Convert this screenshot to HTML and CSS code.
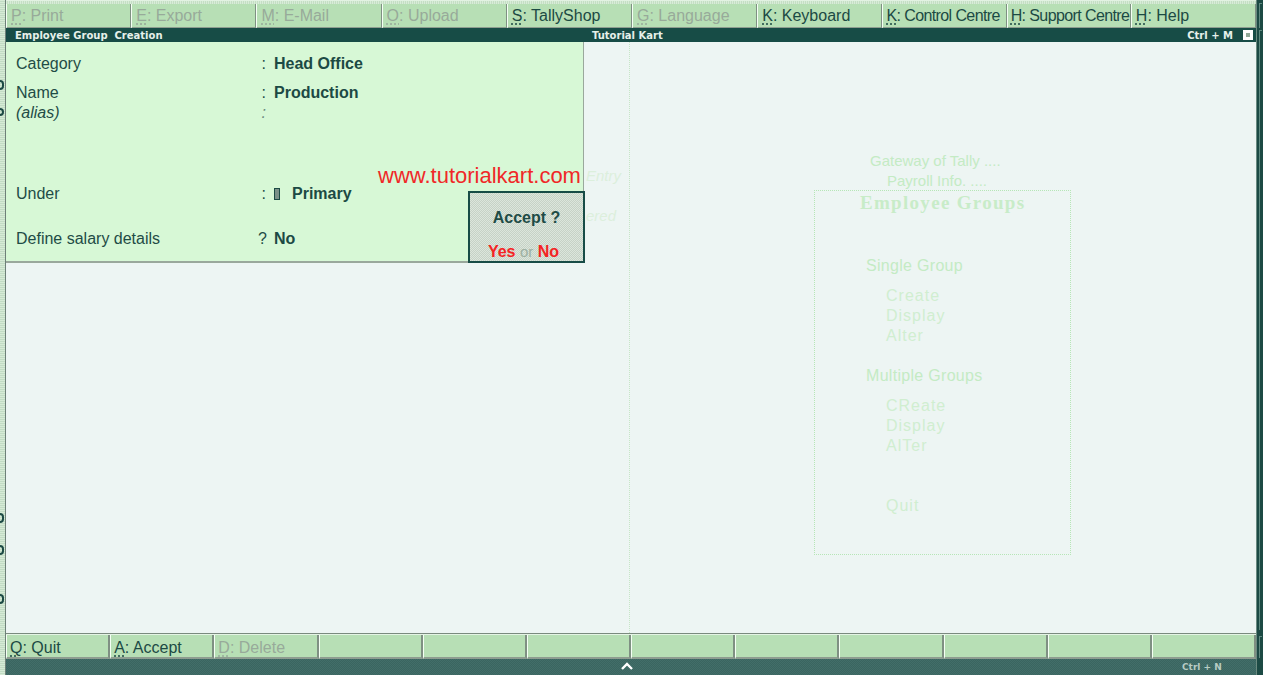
FILE: index.html
```html
<!DOCTYPE html>
<html>
<head>
<meta charset="utf-8">
<link rel="stylesheet" href="styles.css">
</head>
<body>
<div class="app">
  <div class="leftedge"><span class="frag f1"></span><span class="frag f2"></span><span class="frag f3"></span><span class="frag f4"></span><span class="frag f5"></span></div>
  <div class="center">
    <div class="topbar">
      <div class="btn off"><u>P</u>: Print</div>
      <div class="btn off"><u>E</u>: Export</div>
      <div class="btn off"><u>M</u>: E-Mail</div>
      <div class="btn off"><u>O</u>: Upload</div>
      <div class="btn"><u>S</u>: TallyShop</div>
      <div class="btn off"><u>G</u>: Language</div>
      <div class="btn"><u>K</u>: Keyboard</div>
      <div class="btn narrow"><u>K</u>: Control Centre</div>
      <div class="btn narrow"><u>H</u>: Support Centre</div>
      <div class="btn"><u>H</u>: Help</div>
    </div>
    <div class="titlebar">
      <span class="t-left">Employee Group&nbsp; Creation</span>
      <span class="t-mid">Tutorial Kart</span>
      <span class="t-right">Ctrl + M <span class="sq"></span></span>
    </div>
    <div class="main">
      <div class="bgmenu">
        <div class="bm-head1">Gateway of Tally ....</div>
        <div class="bm-head2">Payroll Info. ....</div>
        <div class="bm-box">
          <div class="bm-title">Employee Groups</div>
          <div class="bm-sec">Single Group</div>
          <div class="bm-item">Create</div>
          <div class="bm-item">Display</div>
          <div class="bm-item">Alter</div>
          <div class="bm-sec second">Multiple Groups</div>
          <div class="bm-item">CReate</div>
          <div class="bm-item">Display</div>
          <div class="bm-item">AlTer</div>
          <div class="bm-item quit">Quit</div>
        </div>
      </div>
      <div class="vline"></div>
      <div class="ghost g1">Entry</div>
      <div class="ghost g2">ered</div>
      <div class="form">
        <div class="row r-cat"><span class="lbl">Category</span><span class="sep">:</span><span class="val">Head Office</span></div>
        <div class="row r-name"><span class="lbl">Name</span><span class="sep">:</span><span class="val">Production</span></div>
        <div class="row r-alias"><span class="lbl it">(alias)</span><span class="sep it">:</span><span class="val"></span></div>
        <div class="row r-under"><span class="lbl">Under</span><span class="sep">:</span><span class="val"><span class="blk"></span>Primary</span></div>
        <div class="row r-def"><span class="lbl">Define salary details</span><span class="sep">?</span><span class="val">No</span></div>
      </div>
      <div class="watermark">www.tutorialkart.com</div>
      <div class="accept">
        <div class="acc-q">Accept ?</div>
        <div class="acc-yn"><span class="red">Yes</span> <span class="or">or</span> <span class="red">No</span></div>
      </div>
    </div>
    <div class="bottombar">
      <div class="bbtn"><u>Q</u>: Quit</div>
      <div class="bbtn"><u>A</u>: Accept</div>
      <div class="bbtn off"><u>D</u>: Delete</div>
      <div class="bbtn"></div>
      <div class="bbtn"></div>
      <div class="bbtn"></div>
      <div class="bbtn"></div>
      <div class="bbtn"></div>
      <div class="bbtn"></div>
      <div class="bbtn"></div>
      <div class="bbtn"></div>
      <div class="bbtn"></div>
    </div>
    <div class="strip">
      <span class="chev"><svg width="12" height="8" viewBox="0 0 12 8"><path d="M1 7 L6 2 L11 7" fill="none" stroke="#ffffff" stroke-width="2.4"/></svg></span>
      <span class="ctrln">Ctrl + N</span>
    </div>
  </div>
  <div class="rightedge"><span class="seg s1"></span><span class="seg s2"></span><span class="seg s3"></span></div>
</div>
</body>
</html>
```

FILE: styles.css
```css
* { box-sizing: border-box; }
html, body { margin: 0; padding: 0; }
body {
  width: 1263px;
  height: 675px;
  overflow: hidden;
  font-family: "Liberation Sans", Arial, sans-serif;
  color: #1c4a44;
  background: #edf5f3;
}
.app {
  display: flex;
  width: 1263px;
  height: 675px;
}
.leftedge {
  width: 6px;
  position: relative;
  background: repeating-linear-gradient(0deg, #d6ead6 0 1px, #c2dcc4 1px 2px);
  border-right: 1px solid #6e8078;
}
.frag {
  position: absolute;
  left: 0;
  width: 4px;
  height: 10px;
  border: 2px solid #1c4a44;
  border-left: none;
  border-radius: 0 4px 4px 0;
}
.f1 { top: 80px; }
.f2 { top: 108px; height: 8px; }
.f3 { top: 513px; }
.f4 { top: 545px; }
.f5 { top: 594px; }
.center {
  width: 1250px;
  display: flex;
  flex-direction: column;
}
.rightedge {
  width: 7px;
  position: relative;
  background: #1c4a44;
  border-left: 1px solid #6a8a80;
}
.seg {
  position: absolute;
  left: 2px;
  width: 3px;
  border-left: 1px solid #5f8a80;
  border-top: 1px solid #5f8a80;
}
.s1 { top: 3px; height: 25px; }
.s2 { top: 30px; height: 600px; }
.s3 { top: 636px; height: 22px; }

/* top button bar */
.topbar {
  height: 28px;
  display: flex;
  padding-top: 3px;
  background: repeating-linear-gradient(90deg, #d8ecd8 0 1px, #c4dec4 1px 2px);
  border-top: 1px solid #e2f2e2;
}
.btn {
  flex: 1;
  height: 25px;
  background: #b7dfb5;
  border-left: 1px solid #f4fff4;
  border-right: 1px solid #7f9083;
  border-bottom: 2px solid #8e9d90;
  font-size: 16px;
  line-height: 24px;
  padding-left: 4px;
  white-space: nowrap;
  overflow: hidden;
  color: #1c4a44;
}
.btn.narrow { letter-spacing: -0.6px; padding-left: 3px; }
.btn.off, .bbtn.off { color: #98aa9a; }
u {
  text-decoration: underline dotted;
  text-underline-offset: 3px;
}

/* title bar */
.titlebar {
  height: 14px;
  background: #174c46;
  position: relative;
  display: flex;
  align-items: center;
  font-family: "DejaVu Sans", Verdana, sans-serif;
  font-weight: bold;
  font-size: 10px;
  color: #e6f0ea;
  padding-left: 9px;
}
.t-left { flex: 1; }
.t-mid {
  position: absolute;
  left: 586px;
  top: 0;
  bottom: 0;
  display: flex;
  align-items: center;
}
.t-right {
  display: flex;
  align-items: center;
  gap: 10px;
  padding-right: 3px;
}
.sq {
  display: inline-block;
  width: 10px;
  height: 10px;
  border: 3px solid #ffffff;
  background: #90a898;
}

/* main area */
.main {
  flex: 1;
  position: relative;
  background: #edf5f3;
  border-bottom: 1px solid #7a8a7e;
}
.form {
  width: 578px;
  height: 221px;
  background: #d7f8d6;
  border-right: 1px solid #9aa89c;
  border-bottom: 2px solid #9aa89c;
  padding-top: 12px;
  padding-left: 10px;
  position: relative;
}
.row {
  display: flex;
  font-size: 16px;
  line-height: 20px;
}
.lbl { width: 242px; color: #1f4c46; }
.sep { width: 8px; text-align: right; color: #1f4c46; }
.val { padding-left: 8px; font-weight: bold; color: #1c4a44; display: flex; align-items: center; }
.it { font-style: italic; }
.sep.it { color: #6c8a80; }
.r-name { margin-top: 9px; }
.r-under { margin-top: 61px; }
.r-def { margin-top: 25px; }
.blk {
  display: inline-block;
  width: 6px;
  height: 12px;
  background: #7a9088;
  border: 1.5px solid #1c4a44;
  margin-right: 12px;
}

.watermark {
  position: absolute;
  left: 372px;
  top: 121px;
  font-size: 22px;
  color: #f02828;
  white-space: nowrap;
}
.accept {
  position: absolute;
  left: 462px;
  top: 149px;
  width: 117px;
  height: 72px;
  border: 2px solid #174c46;
  background: repeating-conic-gradient(#dce6dc 0 25%, #c6d2c6 0 50%) 0 0 / 2px 2px;
  text-align: center;
  font-weight: bold;
  font-size: 16px;
}
.acc-q { margin-top: 15px; line-height: 20px; color: #1f4c46; }
.acc-yn { margin-top: 14px; line-height: 20px; font-size: 16px; padding-right: 6px; }
.red { color: #f42424; }
.or { color: #9cb0a2; font-weight: normal; font-size: 15px; }

.vline {
  position: absolute;
  left: 623px;
  top: 0;
  bottom: 0;
  border-left: 1px dotted #c6e6c6;
}
.ghost {
  position: absolute;
  font-style: italic;
  font-size: 15px;
  color: #dcefdc;
}
.g1 { left: 580px; top: 125px; }
.g2 { left: 580px; top: 165px; }

.bgmenu {
  position: absolute;
  left: 808px;
  top: 110px;
  color: #c4ebc4;
  font-size: 16px;
}
.bm-head1 { position: absolute; left: 56px; top: 0; white-space: nowrap; font-size: 15px; }
.bm-head2 { position: absolute; left: 73px; top: 20px; white-space: nowrap; font-size: 15px; }
.bm-box {
  position: absolute;
  left: 0;
  top: 38px;
  width: 257px;
  height: 365px;
  border: 1px dotted #b6e6b6;
}
.bm-title {
  font-family: "Liberation Serif", "Times New Roman", serif;
  font-size: 19px;
  font-weight: bold;
  letter-spacing: 1.3px;
  color: #c8ecc8;
  margin-top: 2px;
  padding-left: 45px;
  line-height: 20px;
}
.bm-sec { padding-left: 51px; margin-top: 43px; line-height: 20px; letter-spacing: 0.3px; }
.bm-sec.second { margin-top: 20px; }
.bm-item { padding-left: 71px; margin-top: 10px; line-height: 20px; letter-spacing: 1px; color: #d0eed0; }
.bm-item + .bm-item { margin-top: 0; }
.bm-item.quit { margin-top: 40px; }

/* bottom bar */
.bottombar {
  height: 25px;
  display: flex;
  background: #c8dcc8;
  border-top: 1px solid #e4f4e4;
}
.bbtn {
  flex: 1;
  height: 24px;
  background: #b7dfb5;
  border-left: 1px solid #f4fff4;
  border-right: 2px solid #7f9083;
  border-bottom: 2px solid #8e9d90;
  font-size: 16px;
  line-height: 25px;
  padding-left: 3px;
  white-space: nowrap;
  overflow: hidden;
  color: #1c4a44;
}
.strip {
  height: 16px;
  position: relative;
  background: repeating-conic-gradient(#426e69 0 25%, #3a6560 0 50%) 0 0 / 2px 2px;
}
.chev {
  position: absolute;
  left: 615px;
  top: 3px;
  line-height: 0;
}
.ctrln {
  position: absolute;
  left: 1176px;
  top: 3px;
  font-family: "DejaVu Sans", Verdana, sans-serif;
  font-weight: bold;
  font-size: 9px;
  color: #b8ccc4;
}
```
